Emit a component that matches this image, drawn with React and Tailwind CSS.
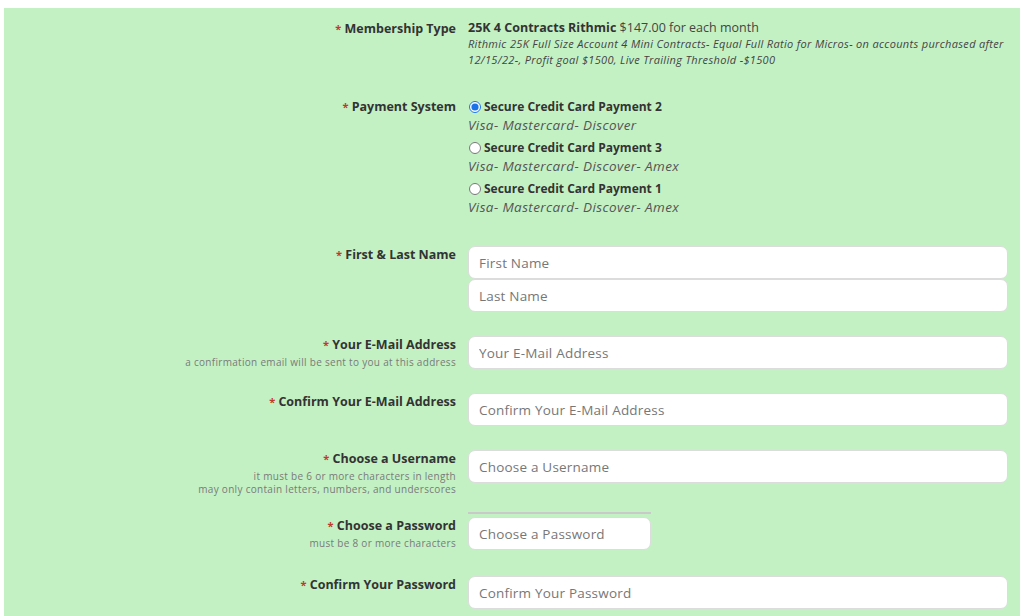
import React from "react";

const font = { fontFamily: '"Open Sans", "Noto Sans", sans-serif' };

function Label({ children, help }) {
  return (
    <div className="text-right pt-[1px]">
      <div className="text-[12.5px] leading-[16px] font-bold text-[#333]">
        <span className="text-[#c0392b] text-[11px] align-top">*</span> {children}
      </div>
      {help && (
        <div className="mt-[3px] text-[10px] leading-[13px] tracking-[0.3px] text-[#7a7a7a]">
          {help.map((h, i) => (
            <div key={i}>{h}</div>
          ))}
        </div>
      )}
    </div>
  );
}

function Input({ placeholder, className = "" }) {
  return (
    <input
      placeholder={placeholder}
      className={
        "block h-[33px] rounded-[7px] border border-[#dcdcdc] bg-white pl-[10px] text-[13.5px] tracking-[0.2px] text-[#333] placeholder:text-[#777] outline-none " +
        className
      }
      style={font}
    />
  );
}

function Row({ label, help, children, className = "" }) {
  return (
    <div className={"grid grid-cols-[452px_540px] gap-x-[12px] " + className}>
      <Label help={help}>{label}</Label>
      <div>{children}</div>
    </div>
  );
}

function Option({ checked, title, desc, className = "" }) {
  return (
    <div className={className}>
      <label className="flex items-center h-[18px] gap-[3px]">
        <input
          type="radio"
          name="pay"
          defaultChecked={checked}
          className="m-0 ml-[1px] h-[12px] w-[12px] accent-[#1a73e8]"
        />
        <span className="text-[12px] font-bold text-[#333]">{title}</span>
      </label>
      <div className="h-[18px] leading-[18px] text-[13.5px] tracking-[0.4px] italic text-[#555]">{desc}</div>
    </div>
  );
}

export default function App() {
  return (
    <div className="w-[1024px] h-[616px] bg-white pl-[4px] pt-[8px] overflow-hidden" style={font}>
      <div className="w-[1016px] h-[620px] bg-[#c3f1c4] pt-[12px]">
        <Row label="Membership Type">
          <div className="text-[12.5px] leading-[16px] text-[#444]">
            <span className="font-bold text-[#333]">25K 4 Contracts Rithmic</span> $147.00 for each month
          </div>
          <div className="w-[546px] text-[11px] leading-[16px] tracking-[0.33px] italic text-[#444]">
            Rithmic 25K Full Size Account 4 Mini Contracts- Equal Full Ratio for Micros- on accounts purchased after
            12/15/22-, Profit goal $1500, Live Trailing Threshold -$1500
          </div>
        </Row>

        <Row label="Payment System" className="mt-[30px]">
          <Option checked title="Secure Credit Card Payment 2" desc="Visa- Mastercard- Discover" />
          <Option
            title="Secure Credit Card Payment 3"
            desc="Visa- Mastercard- Discover- Amex"
            className="mt-[5px]"
          />
          <Option
            title="Secure Credit Card Payment 1"
            desc="Visa- Mastercard- Discover- Amex"
            className="mt-[5px]"
          />
        </Row>

        <Row label="First & Last Name" className="mt-[30px]">
          <Input placeholder="First Name" className="w-[540px]" />
          <Input placeholder="Last Name" className="w-[540px]" />
        </Row>

        <Row
          label="Your E-Mail Address"
          help={["a confirmation email will be sent to you at this address"]}
          className="mt-[24px]"
        >
          <Input placeholder="Your E-Mail Address" className="w-[540px]" />
        </Row>

        <Row label="Confirm Your E-Mail Address" className="mt-[24px]">
          <Input placeholder="Confirm Your E-Mail Address" className="w-[540px]" />
        </Row>

        <Row
          label="Choose a Username"
          help={["it must be 6 or more characters in length", "may only contain letters, numbers, and underscores"]}
          className="mt-[24px]"
        >
          <Input placeholder="Choose a Username" className="w-[540px]" />
        </Row>

        <div className="grid grid-cols-[452px_540px] gap-x-[12px] mt-[16px]">
          <div />
          <div className="w-[183px] h-[2px] bg-[#c9c9c9]" />
        </div>

        <Row label="Choose a Password" help={["must be 8 or more characters"]} className="mt-[3px]">
          <Input placeholder="Choose a Password" className="w-[183px]" />
        </Row>

        <Row label="Confirm Your Password" className="mt-[26px]">
          <Input placeholder="Confirm Your Password" className="w-[540px]" />
        </Row>
      </div>
    </div>
  );
}
